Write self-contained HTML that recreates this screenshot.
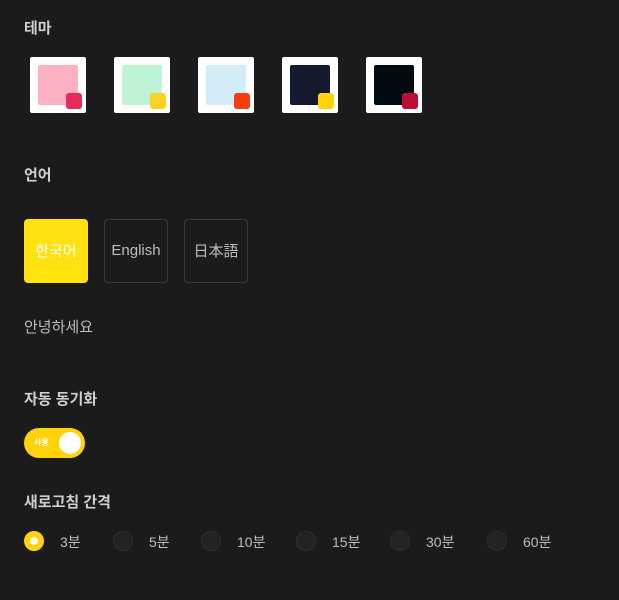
<!DOCTYPE html>
<html><head><meta charset="utf-8"><style>
body{margin:0;width:619px;height:600px;background:#1b1b1b;font-family:"Liberation Sans","Noto Sans CJK KR",sans-serif;color:#c8c8c8;position:relative;overflow:hidden}
.a{position:absolute}
h3{position:absolute;margin:0;font-size:15px;font-weight:bold;color:#cfcfcf;left:24px}
.t{position:absolute;top:57px;width:56px;height:56px;background:#fff;border-radius:2px}
.t i{position:absolute;left:8px;top:8px;width:40px;height:40px;border-radius:2px}
.t b{position:absolute;left:36px;top:36px;width:16px;height:16px;border-radius:3px}
.l{position:absolute;top:219px;width:62px;height:60px;padding-bottom:2px;border:1px solid #3a3a3a;border-radius:4px;font-size:15px;color:#bdbdbd;display:flex;align-items:center;justify-content:center}
.r{position:absolute;top:531px;width:18px;height:18px;border:1px solid #2e2e2e;background:#232323;border-radius:50%}
.rl{position:absolute;top:532px;font-size:14px;color:#bdbdbd}
</style></head><body>
<h3 style="top:17px">테마</h3>
<div class="t" style="left:30px"><i style="background:#fcb1c3"></i><b style="background:#e52b56"></b></div>
<div class="t" style="left:114px"><i style="background:#bff3d5"></i><b style="background:#fad423"></b></div>
<div class="t" style="left:198px"><i style="background:#d4ebf8"></i><b style="background:#f53d0e"></b></div>
<div class="t" style="left:282px"><i style="background:#131a2d"></i><b style="background:#ffd20a"></b></div>
<div class="t" style="left:366px"><i style="background:#030b12"></i><b style="background:#bf0c35"></b></div>
<h3 style="top:164px">언어</h3>
<div class="l" style="left:24px;background:#ffe20f;border-color:#ffe20f;color:#fff">한국어</div>
<div class="l" style="left:104px">English</div>
<div class="l" style="left:184px">日本語</div>
<div class="a" style="left:24px;top:316px;font-size:15px;color:#bdbdbd">안녕하세요</div>
<h3 style="top:388px">자동 동기화</h3>
<div class="a" style="left:24px;top:428px;width:61px;height:30px;border-radius:15px;background:#ffd20a">
<span class="a" style="left:10px;top:9px;font-size:8px;color:#fff;font-weight:bold">사용</span>
<span class="a" style="left:35px;top:4px;width:22px;height:22px;border-radius:50%;background:#fff"></span></div>
<h3 style="top:491px">새로고침 간격</h3>
<div class="r" style="left:24px;background:#ffd20a;border-color:#ffd20a"><span class="a" style="left:5px;top:5px;width:8px;height:8px;border-radius:50%;background:#fff"></span></div>
<div class="rl" style="left:60px">3분</div>
<div class="r" style="left:113px"></div><div class="rl" style="left:149px">5분</div>
<div class="r" style="left:201px"></div><div class="rl" style="left:237px">10분</div>
<div class="r" style="left:296px"></div><div class="rl" style="left:332px">15분</div>
<div class="r" style="left:390px"></div><div class="rl" style="left:426px">30분</div>
<div class="r" style="left:487px"></div><div class="rl" style="left:523px">60분</div>
</body></html>
